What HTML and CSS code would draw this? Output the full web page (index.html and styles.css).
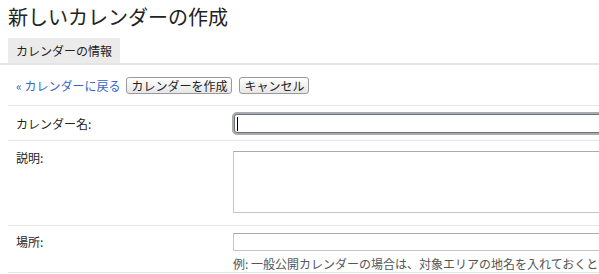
FILE: index.html
```html
<!DOCTYPE html>
<html lang="ja">
<head>
    <meta charset="UTF-8">
    <meta name="viewport" content="width=device-width, initial-scale=1.0">
    <title>新しいカレンダーの作成</title>
    <link rel="stylesheet" href="styles.css">
</head>
<body>

<div class="page">
    <h1 class="title">新しいカレンダーの作成</h1>

    <div class="tabs">
        <div class="tab">カレンダーの情報</div>
    </div>

    <div class="actions">
        <a class="back" href="#">« カレンダーに戻る</a>
        <button class="btn">カレンダーを作成</button>
        <button class="btn">キャンセル</button>
    </div>

    <div class="row row-name">
        <label class="label" for="name">カレンダー名:</label>
        <div class="field">
            <span class="focus-wrap">
                <input type="text" id="name" class="input focused">
                <span class="caret"></span>
            </span>
        </div>
    </div>

    <div class="row row-desc">
        <label class="label" for="desc">説明:</label>
        <div class="field">
            <textarea id="desc" class="textarea"></textarea>
        </div>
    </div>

    <div class="row row-place">
        <label class="label" for="place">場所:</label>
        <div class="field">
            <input type="text" id="place" class="input">
            <div class="hint">例: 一般公開カレンダーの場合は、対象エリアの地名を入れておくと</div>
        </div>
    </div>
</div>

</body>
</html>
```

FILE: styles.css
```css
/* カレンダー作成フォーム */
html, body {
    margin: 0;
    overflow: hidden;
    background: #fff;
}
body {
    font-family: "Noto Sans CJK JP", "Liberation Sans", sans-serif;
    font-size: 12px;
    color: #222;
}
.page {
    padding: 0 0 0 8px;
    width: 900px;
}
.title {
    margin: 4px 0 0;
    font-size: 20px;
    font-weight: normal;
    line-height: 26px;
    color: #222;
}
.tabs {
    margin: 8px 0 0 -8px;
    padding-left: 8px;
    border-bottom: 2px solid #e5e5e5;
    display: flex;
}
.tab {
    background: #ebebeb;
    height: 25px;
    line-height: 25px;
    padding: 0 8px;
    width: 96px;
    color: #222;
}
.actions {
    display: flex;
    align-items: center;
    padding: 12px 0 11px 8px;
    border-bottom: 1px solid #e6e6e6;
}
.back {
    color: #36c;
    text-decoration: none;
    margin-right: 6px;
    line-height: 16px;
}
.btn {
    font-family: inherit;
    font-size: 12px;
    color: #222;
    height: 17px;
    line-height: 15px;
    padding: 0 4px;
    margin-right: 7px;
    border: 1px solid #9a9a9a;
    border-radius: 3px;
    background: linear-gradient(#fefefe, #e6e6e6);
}
.row {
    display: flex;
    border-bottom: 1px solid #e6e6e6;
}
.label {
    width: 217px;
    padding-left: 8px;
    color: #222;
}
.row-name {
    padding: 7px 0 6px;
    height: 21px;
}
.row-name .label {
    line-height: 21px;
}
.row-desc {
    padding: 10px 0 12px;
}
.row-desc .label {
    line-height: 14px;
}
.row-place {
    padding: 7px 0 0;
}
.row-place .label {
    line-height: 18px;
}
.field {
    flex: 1;
}
.focus-wrap {
    position: relative;
    display: block;
    padding: 1px 0 0 1px;
}
.input {
    display: block;
    box-sizing: border-box;
    width: 420px;
    height: 18px;
    margin: 0;
    border: 1px solid #c4c4c4;
    border-top-color: #aaa;
    padding: 0 2px;
    font-family: inherit;
    font-size: 12px;
}
.input.focused {
    height: 19px;
    border: 1px solid #6f7377;
    border-radius: 3px;
    box-shadow: 0 0 0 2px #a6abb0;
    outline: none;
}
.caret {
    position: absolute;
    left: 4px;
    top: 4px;
    width: 1px;
    height: 14px;
    background: #000;
}
.textarea {
    display: block;
    box-sizing: border-box;
    width: 420px;
    height: 62px;
    margin: 0;
    border: 1px solid #c4c4c4;
    border-top-color: #aaa;
    resize: none;
}
.hint {
    margin-top: 5px;
    color: #555;
    white-space: nowrap;
    line-height: 16px;
}
```
